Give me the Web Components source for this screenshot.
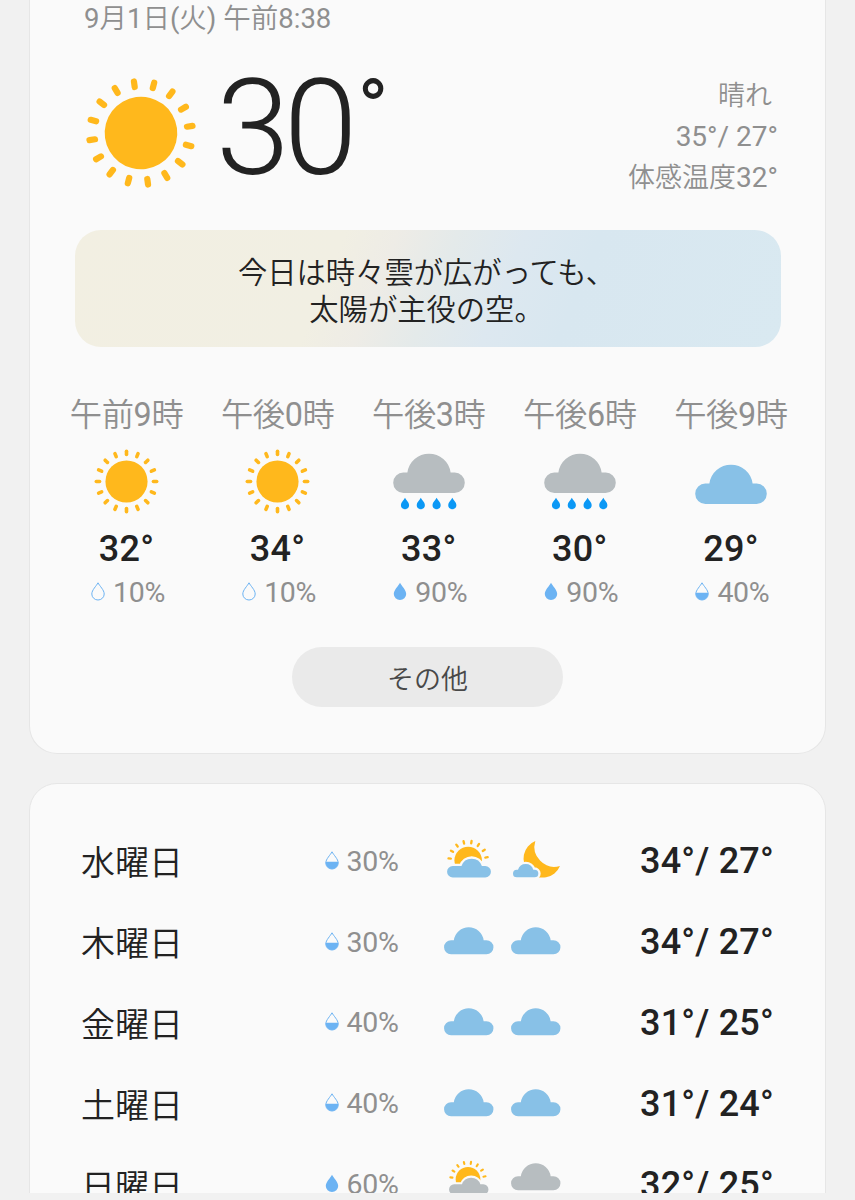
<!DOCTYPE html>
<html lang="ja">
<head>
<meta charset="utf-8">
<title>天気</title>
<style>
  :root {
    --page: #f1f1f1;
    --card: #fafafa;
    --line: #e6e6e6;
    --text: #222;
    --muted: #8f8f8f;
    --sun: #ffb81c;
    --cloud: #88c1e7;
    --cloud-dark: #b7bdc0;
    --drop: #6cb3f3;
    --rain: #0b98f5;
  }

  body {
    margin: 0;
    height: 1200px;
    overflow: hidden;
    background: var(--page);
    color: var(--text);
    font-family: Roboto, "Noto Sans CJK JP", sans-serif;
  }
</style>
</head>
<body>
<weather-app></weather-app>

<script>
const CLOUD = 'M10.2 41A10.2 10.2 0 0 1 10.2 20.6H14.2A21.8 21.8 0 0 1 57.4 20.6H61.4A10.2 10.2 0 0 1 61.4 41Z';
const DROP = 'M7 .8C8.6 4 13.2 8 13.2 12A6.2 6 0 0 1 .8 12C.8 8 5.4 4 7 .8Z';

function rays(count, start, step, inner, outer, width) {
  let out = '';
  for (let i = 0; i < count; i++) {
    out += `<line y1="${-inner}" y2="${-outer}" stroke="var(--sun)" stroke-width="${width}" stroke-linecap="round" transform="rotate(${start + i * step})"/>`;
  }
  return out;
}

function partly(color) {
  return `
    <g transform="translate(63 64)">
      <circle r="41" fill="var(--sun)"/>
      ${rays(8, -84, 23.5, 52, 59, 7)}
    </g>
    <path d="M17 115A17 17 0 0 1 17 81H43A32 32 0 0 1 104 81H114A17 17 0 0 1 114 115Z"
      fill="var(--card)" stroke="var(--card)" stroke-width="14"/>
    <path d="M17 115A17 17 0 0 1 17 81H43A32 32 0 0 1 104 81H114A17 17 0 0 1 114 115Z" fill="${color}"/>`;
}

// kanji are set lighter than the figures beside them
function kanji(text) {
  return text.replace(/[^\x00-\x7f]+/g, '<span class="kanji">$&</span>');
}

const ICONS = {
  sunny: {
    box: '-56 -56 112 112',
    art: `<circle r="36.3" fill="var(--sun)"/>${rays(16, 0, 22.5, 46.4, 52, 6.2)}`
  },
  cloudy: { box: '0 0 71.6 41', art: `<path fill="var(--cloud)" d="${CLOUD}"/>` },
  overcast: { box: '0 0 71.6 41', art: `<path fill="var(--cloud-dark)" d="${CLOUD}"/>` },
  rain: {
    box: '0 0 71.6 58',
    art: `<path fill="var(--cloud-dark)" d="${CLOUD}"/>` +
      [11.8, 27.6, 43.4, 59.1].map(x =>
        `<path fill="var(--rain)" transform="translate(${x} 45.8)" d="M0 0C1 2.3 4.1 4.6 4.1 7.3A4.1 4.1 0 0 1-4.1 7.3C-4.1 4.6-1 2.3 0 0Z"/>`
      ).join('')
  },
  partly: { box: '0 0 131 115', art: partly('var(--cloud)') },
  'partly-dark': { box: '0 0 131 115', art: partly('var(--cloud-dark)') },
  night: {
    box: '0 0 141 110',
    art: `
      <path fill="var(--sun)" d="M67 0A57 57 0 1 0 141 75A60 60 0 0 1 67 0Z"/>
      <path d="M11.5 109A11.5 11.5 0 0 1 11.5 86H15A24 24 0 0 1 61 86H64.5A11.5 11.5 0 0 1 64.5 109Z"
        fill="var(--cloud)" stroke="var(--card)" stroke-width="14" paint-order="stroke"/>`
  },
  'drop-empty': {
    box: '0 0 14 19',
    art: `<path fill="none" stroke="var(--drop)" d="${DROP}"/>`
  },
  'drop-half': {
    box: '0 0 14 19',
    art: `<path fill="none" stroke="var(--drop)" d="${DROP}"/>
      <path fill="var(--drop)" d="M.8 10.7H13.2V12A6.2 6 0 0 1 .8 12Z"/>`
  },
  'drop-full': {
    box: '0 0 14 19',
    art: `<path fill="var(--drop)" d="${DROP}"/>`
  }
};

class WeatherIcon extends HTMLElement {
  constructor() {
    super();
    this.attachShadow({ mode: 'open' });
  }

  connectedCallback() {
    const icon = ICONS[this.getAttribute('name')];
    this.shadowRoot.innerHTML = `
      <style>
        :host {
          display: block;
          flex: none;
        }

        svg {
          display: block;
          width: 100%;
          height: 100%;
          overflow: visible;
        }
      </style>
      <svg viewBox="${icon.box}" aria-hidden="true">${icon.art}</svg>
    `;
  }
}

class RainChance extends HTMLElement {
  constructor() {
    super();
    this.attachShadow({ mode: 'open' });
  }

  connectedCallback() {
    const value = Number(this.getAttribute('value'));
    const level = value >= 60 ? 'full' : value >= 30 ? 'half' : 'empty';
    this.shadowRoot.innerHTML = `
      <style>
        :host {
          display: flex;
          align-items: center;
          justify-content: center;
          gap: 8px;
          color: var(--muted);
          font-size: 28.5px;
          line-height: 34px;
          letter-spacing: -0.3px;
        }

        weather-icon {
          width: 14px;
          height: 19px;
          margin-top: -3px;
        }
      </style>
      <weather-icon name="drop-${level}"></weather-icon>
      <span>${value}%</span>
    `;
  }
}

class WeatherCard extends HTMLElement {
  constructor() {
    super();
    this.attachShadow({ mode: 'open' });
  }

  connectedCallback() {
    this.shadowRoot.innerHTML = `
      <style>
        :host {
          display: block;
          box-sizing: border-box;
          margin: 0 29px;
          border: 1px solid var(--line);
          border-radius: 28px;
          background: var(--card);
        }
      </style>
      <slot></slot>
    `;
  }
}

class CurrentWeather extends HTMLElement {
  constructor() {
    super();
    this.attachShadow({ mode: 'open' });
  }

  connectedCallback() {
    this.shadowRoot.innerHTML = `
      <style>
        :host {
          display: block;
          padding: 0 47px 0 54px;
        }

        .kanji {
          font-weight: 350;
        }

        time {
          display: block;
          box-sizing: border-box;
          height: 36px;
          padding-top: 1px;
          color: var(--muted);
          font-size: 27.5px;
          line-height: 36px;
        }

        .now {
          display: flex;
          height: 160px;
          align-items: flex-start;
        }

        weather-icon {
          width: 112px;
          height: 112px;
          margin: 41px 0 0 1px;
          transform: rotate(-7.8deg);
        }

        .temp {
          display: flex;
          margin: 18px 0 0 19px;
          font-size: 133px;
          line-height: 150px;
          font-weight: 300;
          letter-spacing: -6px;
        }

        .degree {
          margin: -19px 0 0 6px;
          font-size: 83px;
          font-weight: 400;
          letter-spacing: 0;
        }

        .detail {
          flex: 1;
          margin-top: 38px;
          color: var(--muted);
          font-size: 28px;
          line-height: 41px;
          text-align: right;
        }

        .detail p {
          margin: 0;
        }

        .detail p:first-child {
          padding: 1px 6px 0 0;
          margin-bottom: -1px;
        }

        .detail .kanji {
          font-size: 27px;
        }
      </style>
      <time>${kanji('9月1日(火) 午前8:38')}</time>
      <div class="now">
        <weather-icon name="sunny"></weather-icon>
        <div class="temp">30<span class="degree">°</span></div>
        <div class="detail">
          <p><span class="kanji">晴れ</span></p>
          <p>35°/ 27°</p>
          <p><span class="kanji">体感温度</span>32°</p>
        </div>
      </div>
    `;
  }
}

class WeatherAdvice extends HTMLElement {
  constructor() {
    super();
    this.attachShadow({ mode: 'open' });
  }

  connectedCallback() {
    this.shadowRoot.innerHTML = `
      <style>
        :host {
          display: flex;
          align-items: center;
          justify-content: center;
          box-sizing: border-box;
          width: 706px;
          height: 117px;
          padding: 6px 3px 0 0;
          margin: 34px 0 0 45px;
          border-radius: 26px;
          background: linear-gradient(112deg, #f2efe2 0%, #f1efe3 36%, #eeece6 43%, #e4eaea 51%, #dde8f0 60%, #d8e7f0 70%, #d9e9f1 100%);
          font-size: 29.3px;
          line-height: 37px;
          font-weight: 350;
          text-align: center;
        }
      </style>
      <slot></slot>
    `;
  }
}

class HourForecast extends HTMLElement {
  constructor() {
    super();
    this.attachShadow({ mode: 'open' });
  }

  connectedCallback() {
    const icon = this.getAttribute('icon');
    this.shadowRoot.innerHTML = `
      <style>
        :host {
          display: flex;
          flex-direction: column;
          align-items: center;
        }

        .hour {
          padding-top: 1px;
          color: var(--muted);
          font-size: 32.3px;
          line-height: 44px;
          letter-spacing: -0.4px;
          white-space: nowrap;
        }

        .kanji {
          font-weight: 350;
        }

        .icon {
          display: flex;
          align-items: center;
          height: 66px;
          margin: 11px 0 14px;
        }

        weather-icon {
          width: 72px;
          height: 41px;
        }

        weather-icon[name="sunny"] {
          width: 65px;
          height: 65px;
        }

        weather-icon[name="rain"] {
          height: 58px;
        }

        weather-icon[name="cloudy"] {
          margin-top: 4px;
        }

        .temp {
          height: 42px;
          font-size: 36px;
          line-height: 42px;
          font-weight: 500;
          letter-spacing: 0.3px;
        }

        rain-chance {
          margin: 6px 0 0 3px;
        }
      </style>
      <div class="hour">${kanji(this.getAttribute('hour'))}</div>
      <div class="icon"><weather-icon name="${icon}"></weather-icon></div>
      <div class="temp">${this.getAttribute('temp')}°</div>
      <rain-chance value="${this.getAttribute('rain')}"></rain-chance>
    `;
  }
}

class MoreButton extends HTMLElement {
  constructor() {
    super();
    this.attachShadow({ mode: 'open' });
  }

  connectedCallback() {
    this.shadowRoot.innerHTML = `
      <style>
        :host {
          display: flex;
          justify-content: center;
        }

        button {
          width: 271px;
          height: 60px;
          padding: 0;
          border: 0;
          border-radius: 30px;
          background: #eaeaea;
          color: #484848;
          font: 350 27px Roboto, "Noto Sans CJK JP", sans-serif;
        }
      </style>
      <button><slot></slot></button>
    `;
  }
}

class DayForecast extends HTMLElement {
  constructor() {
    super();
    this.attachShadow({ mode: 'open' });
  }

  connectedCallback() {
    this.shadowRoot.innerHTML = `
      <style>
        :host {
          display: grid;
          grid-template-columns: 243.5px 78px 33px 67px 67px 1fr;
          align-items: center;
          height: 80.8px;
          padding: 0 51px 0 51px;
        }

        .day {
          padding-top: 4px;
          font-size: 34px;
          font-weight: 350;
          line-height: 44px;
        }

        rain-chance {
          justify-content: flex-start;
          padding-top: 1px;
        }

        .icon {
          display: flex;
          justify-content: center;
        }

        weather-icon {
          width: 49.5px;
          height: 28.3px;
          margin-top: -4px;
        }

        weather-icon[name="partly"] {
          width: 44px;
          height: 38.5px;
          margin-top: -6px;
        }

        weather-icon[name="partly-dark"] {
          width: 39.5px;
          height: 34.6px;
          margin-top: -15px;
        }

        weather-icon[name="overcast"] {
          margin-top: -17px;
        }

        weather-icon[name="night"] {
          width: 47px;
          height: 36.7px;
          margin-top: -5px;
        }

        .temp {
          font-size: 36px;
          font-weight: 500;
          line-height: 44px;
          letter-spacing: 0.2px;
          text-align: right;
          white-space: nowrap;
        }
      </style>
      <div class="day">${this.getAttribute('day')}</div>
      <rain-chance value="${this.getAttribute('rain')}"></rain-chance>
      <span></span>
      <div class="icon"><weather-icon name="${this.getAttribute('am')}"></weather-icon></div>
      <div class="icon"><weather-icon name="${this.getAttribute('pm')}"></weather-icon></div>
      <div class="temp">${this.getAttribute('high')}°/ ${this.getAttribute('low')}°</div>
    `;
  }
}

class WeatherApp extends HTMLElement {
  constructor() {
    super();
    this.attachShadow({ mode: 'open' });
  }

  connectedCallback() {
    this.shadowRoot.innerHTML = `
      <style>
        :host {
          display: block;
          height: 1193px;
          overflow: hidden;
        }

        .today {
          height: 754px;
          border-top: 0;
          border-radius: 0 0 28px 28px;
        }

        .hours {
          display: grid;
          grid-template-columns: repeat(5, 151.1px);
          height: 218px;
          margin: 45px 0 0 21px;
        }

        more-button {
          margin-top: 37px;
        }

        .week {
          height: 440px;
          margin-top: 29px;
        }

        .days {
          padding-top: 37px;
        }
      </style>
      <weather-card class="today">
        <current-weather></current-weather>
        <weather-advice><div>今日は時々雲が広がっても、<br>太陽が主役の空。</div></weather-advice>
        <div class="hours">
          <hour-forecast hour="午前9時" icon="sunny" temp="32" rain="10"></hour-forecast>
          <hour-forecast hour="午後0時" icon="sunny" temp="34" rain="10"></hour-forecast>
          <hour-forecast hour="午後3時" icon="rain" temp="33" rain="90"></hour-forecast>
          <hour-forecast hour="午後6時" icon="rain" temp="30" rain="90"></hour-forecast>
          <hour-forecast hour="午後9時" icon="cloudy" temp="29" rain="40"></hour-forecast>
        </div>
        <more-button>その他</more-button>
      </weather-card>
      <weather-card class="week">
        <div class="days">
          <day-forecast day="水曜日" rain="30" am="partly" pm="night" high="34" low="27"></day-forecast>
          <day-forecast day="木曜日" rain="30" am="cloudy" pm="cloudy" high="34" low="27"></day-forecast>
          <day-forecast day="金曜日" rain="40" am="cloudy" pm="cloudy" high="31" low="25"></day-forecast>
          <day-forecast day="土曜日" rain="40" am="cloudy" pm="cloudy" high="31" low="24"></day-forecast>
          <day-forecast day="日曜日" rain="60" am="partly-dark" pm="overcast" high="32" low="25"></day-forecast>
        </div>
      </weather-card>
    `;
  }
}

customElements.define('weather-icon', WeatherIcon);
customElements.define('rain-chance', RainChance);
customElements.define('weather-card', WeatherCard);
customElements.define('current-weather', CurrentWeather);
customElements.define('weather-advice', WeatherAdvice);
customElements.define('hour-forecast', HourForecast);
customElements.define('more-button', MoreButton);
customElements.define('day-forecast', DayForecast);
customElements.define('weather-app', WeatherApp);
</script>
</body>
</html>
